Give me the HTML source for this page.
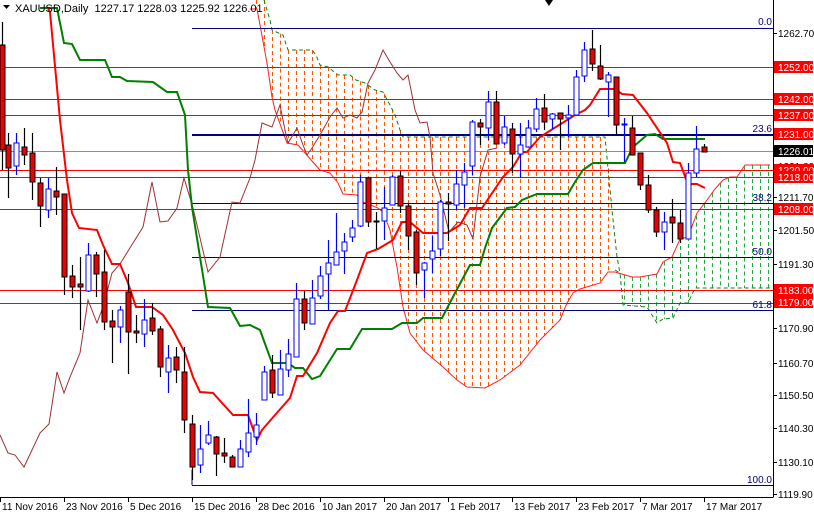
<!DOCTYPE html>
<html><head><meta charset="utf-8">
<style>
html,body{margin:0;padding:0;background:#fff;}
svg{display:block;font-family:"Liberation Sans",sans-serif;}
</style></head>
<body>
<svg id="s" width="814" height="514" viewBox="0 0 814 514" xmlns="http://www.w3.org/2000/svg">
<rect width="814" height="514" fill="#fff"/>
<g id="cloud"></g>
<g stroke="#ff0000" stroke-width="1" shape-rendering="crispEdges">
<line x1="0" y1="67.5" x2="773" y2="67.5"/>
<line x1="0" y1="99.5" x2="773" y2="99.5"/>
<line x1="0" y1="115.5" x2="773" y2="115.5"/>
<line x1="0" y1="170.5" x2="773" y2="170.5"/>
<line x1="0" y1="177.5" x2="773" y2="177.5"/>
<line x1="0" y1="209.5" x2="773" y2="209.5"/>
<line x1="0" y1="290.5" x2="773" y2="290.5"/>
<line x1="0" y1="303.5" x2="773" y2="303.5"/>
</g>
<line x1="0" y1="151.5" x2="773" y2="151.5" stroke="#8090a0" stroke-width="1"/>
<g stroke="#000080" stroke-width="1" shape-rendering="crispEdges">
<line x1="192" y1="28.5" x2="773" y2="28.5"/>
<line x1="192" y1="135" x2="773" y2="135" stroke-width="2"/>
<line x1="192" y1="203.5" x2="773" y2="203.5"/>
<line x1="192" y1="257.5" x2="773" y2="257.5"/>
<line x1="192" y1="310.5" x2="773" y2="310.5"/>
<line x1="192" y1="485.5" x2="773" y2="485.5"/>
<line x1="192" y1="485" x2="192" y2="470"/>
</g>
<g font-size="10" fill="#000080" text-anchor="end">
<text x="772" y="25">0.0</text>
<text x="772" y="132">23.6</text>
<text x="772" y="201">38.2</text>
<text x="772" y="255">50.0</text>
<text x="772" y="308">61.8</text>
<text x="772" y="483">100.0</text>
</g>
<g id="lines" fill="none"></g>
<g id="candles"></g>
<rect x="773" y="0" width="41" height="514" fill="#fff"/>
<rect x="0" y="497" width="814" height="17" fill="#fff"/>
<line x1="773.5" y1="0" x2="773.5" y2="497" stroke="#000"/>
<line x1="0" y1="497.5" x2="773.5" y2="497.5" stroke="#000"/>
<g id="axis" font-size="10" fill="#000"></g>
<g font-size="11" fill="#000">
<path d="M3 5 L10 5 L6.5 9 Z" fill="#000"/>
<text x="15" y="12" xml:space="preserve">XAUUSD,Daily  1227.17 1228.03 1225.92 1226.01</text>
</g>
<path d="M545 0 L553 0 L549 6 Z" fill="#000"/>
</svg>
<script>
var NS="http://www.w3.org/2000/svg";
function el(p,t,a){var e=document.createElementNS(NS,t);for(var k in a)e.setAttribute(k,a[k]);p.appendChild(e);return e;}
function interp(pts,x){for(var i=0;i<pts.length-1;i++){if(x>=pts[i][0]&&x<=pts[i+1][0]){var t=(x-pts[i][0])/(pts[i+1][0]-pts[i][0]||1);return pts[i][1]+t*(pts[i+1][1]-pts[i][1]);}}return null;}
var cl=document.getElementById('cloud');
var U=[[256,0],[264,0],[270,20],[272,30],[283,35],[288,50],[312,50],[316,55],[320,65],[328,67],[338,75],[350,75],[356,80],[365,83],[375,90],[383,92],[390,105],[395,115],[400,130],[403,137],[605,137],[612,210],[617,257],[620,273]];
var L=[[250,9],[257,9],[260,25],[267,63],[272,97],[275,110],[287,143],[298,145],[305,153],[320,170],[330,173],[338,183],[343,194],[357,195],[363,202],[378,208],[383,212],[390,230],[395,257],[397,267],[400,287],[403,307],[410,333],[423,350],[443,367],[457,380],[467,387],[485,388],[500,380],[520,365],[540,340],[560,320],[567,303],[573,293],[580,289],[600,283],[608,272],[615,272]];
for(var x=256;x<=608;x+=8){var a=interp(U,x),b=interp(L,x);if(a!=null&&b!=null&&b>a)el(cl,'line',{x1:x+.5,y1:a,x2:x+.5,y2:b,stroke:'#ff5500','stroke-dasharray':'4,3','stroke-width':1});}
var GA=[[615,272],[632,277],[640,277],[657,274],[663,262],[672,257],[680,239],[688,237],[697,213],[707,200],[715,189],[723,180],[730,177],[737,177],[745,165],[770,165]];
var GB=[[615,270],[620,273],[623,305],[647,307],[657,323],[663,319],[673,318],[680,303],[688,303],[695,288],[770,288]];
for(var x=624;x<=770;x+=8){var a=interp(GA,x),b=interp(GB,x);if(a!=null&&b!=null&&b>a)el(cl,'line',{x1:x+.5,y1:a,x2:x+.5,y2:b,stroke:'#22aa44','stroke-dasharray':'4,3','stroke-width':1});}
function pl(g,pts,c,w,d){var s=pts.map(function(p){return p[0]+','+p[1]}).join(' ');var a={points:s,stroke:c,'stroke-width':w,fill:'none'};if(d)a['stroke-dasharray']=d;el(g,'polyline',a);}
pl(cl,U.slice(1),'#108010',1,'4,3');
pl(cl,L.concat(GA.slice(1)),'#ff2020',1);
pl(cl,GB,'#108010',1,'4,3');
var lg=document.getElementById('lines');
var chik=[[0,435],[8,453],[15,455],[24,467],[40,433],[49,424],[57,372],[64,393],[70,377],[80,353],[88,300],[97,323],[103,307],[112,273],[120,264],[133,243],[143,227],[152,182],[160,222],[168,221],[177,208],[184,178],[193,208],[208,272],[220,257],[232,202],[240,203],[248,183],[250,178],[255,160],[262,123],[272,127],[280,105],[285,130],[288,143],[293,135],[297,128],[303,145],[307,155],[312,148],[320,135],[330,117],[337,108],[343,118],[350,115],[357,118],[362,112],[368,83],[375,70],[383,50],[390,62],[397,73],[403,80],[408,75],[415,110],[420,123],[427,122],[430,137],[433,173],[440,195],[449,232],[458,222],[467,225],[473,239],[480,177],[488,150],[497,148]];
pl(lg,chik,'#a03030',1);
var kij=[[40,8],[57,8],[64,43],[72,44],[80,60],[105,60],[112,77],[120,77],[127,81],[153,82],[167,92],[177,92],[185,115],[188,170],[192,207],[200,257],[208,307],[230,308],[240,326],[250,325],[260,330],[272,363],[288,363],[295,368],[303,368],[312,379],[320,376],[337,349],[350,349],[362,329],[392,329],[402,323],[417,323],[423,318],[442,318],[455,293],[470,265],[480,265],[485,248],[492,228],[507,208],[515,207],[522,200],[537,194],[568,194],[575,182],[583,170],[593,163],[625,163],[633,147],[647,135],[655,134],[663,139],[705,139]];
pl(lg,kij,'#008000',2);
var ten=[[48,8],[50,12],[60,120],[67,180],[72,213],[79,228],[97,230],[103,245],[112,264],[120,264],[128,283],[136,307],[152,307],[163,315],[173,330],[185,353],[193,377],[200,392],[213,393],[233,415],[248,415],[257,440],[262,430],[275,415],[290,398],[297,376],[303,376],[317,353],[330,323],[338,311],[345,311],[357,280],[367,253],[378,249],[393,240],[402,222],[410,222],[423,233],[447,233],[460,225],[470,208],[482,208],[503,177],[513,167],[522,152],[527,152],[540,137],[575,115],[585,110],[590,105],[600,89],[615,89],[622,94],[633,95],[647,113],[667,143],[673,162],[680,163],[688,184],[697,184],[705,188]];
pl(lg,ten,'#ff0000',2);
var C=[[0,45,150,22,170,'r'],[1,145,168,133,198,'r'],[2,143,166,133,175,'b'],[3,147,155,128,165,'r'],[4,153,182,133,200,'r'],[5,183,206,178,227,'r'],[6,189,210,178,218,'b'],[7,191,197,167,215,'r'],[8,194,277,194,295,'r'],[9,276,287,265,298,'r'],[10,284,287,257,330,'r'],[11,255,291,243,292,'b'],[12,255,274,252,297,'r'],[13,272,322,250,330,'r'],[14,321,327,310,363,'r'],[15,310,327,306,343,'b'],[16,292,332,274,374,'r'],[17,331,333,315,343,'r'],[18,320,334,299,347,'b'],[19,318,331,303,335,'r'],[20,329,367,326,377,'r'],[21,358,372,345,393,'b'],[22,357,370,347,383,'r'],[23,372,420,347,433,'r'],[24,424,467,415,480,'r'],[25,449,465,425,473,'b'],[26,435,443,421,445,'b'],[27,437,454,436,476,'r'],[28,453,456,438,463,'r'],[29,457,467,455,467,'r'],[30,449,467,440,467,'b'],[31,433,452,399,457,'b'],[32,425,437,413,445,'b'],[33,372,400,366,400,'b'],[34,370,393,355,398,'r'],[35,369,395,350,395,'b'],[36,354,370,339,377,'b'],[37,299,357,283,357,'b'],[38,299,323,291,330,'r'],[39,298,324,280,324,'b'],[40,276,296,266,299,'b'],[41,263,274,240,310,'b'],[42,252,265,213,265,'b'],[43,242,251,233,274,'b'],[44,228,237,220,242,'b'],[45,182,226,175,227,'b'],[46,178,222,177,227,'r'],[47,221,222,212,249,'r'],[48,208,221,187,240,'b'],[49,177,205,175,205,'b'],[50,176,206,171,213,'r'],[51,206,236,203,250,'r'],[52,232,273,230,285,'r'],[53,263,270,262,298,'b'],[54,251,259,236,273,'b'],[55,202,249,200,256,'b'],[56,202,204,193,241,'r'],[57,184,205,170,210,'b'],[58,172,185,163,208,'b'],[59,122,166,120,175,'b'],[60,123,127,119,145,'r'],[61,102,128,91,140,'b'],[62,102,144,91,144,'r'],[63,127,143,116,145,'b'],[64,129,154,123,173,'r'],[65,145,154,123,178,'b'],[66,128,147,120,147,'b'],[67,109,129,98,132,'b'],[68,108,122,94,130,'r'],[69,114,119,113,129,'b'],[70,113,119,113,150,'r'],[71,115,118,105,137,'b'],[72,77,115,70,115,'b'],[73,50,76,42,82,'b'],[74,49,64,30,71,'r'],[75,66,79,45,80,'r'],[76,75,82,72,117,'b'],[77,77,125,77,135,'r'],[78,124,125,118,162,'b'],[79,128,155,116,155,'r'],[80,153,185,153,190,'r'],[81,185,210,175,213,'r'],[82,210,232,207,237,'r'],[83,222,232,212,250,'b'],[84,217,223,199,243,'r'],[85,223,239,210,243,'r'],[86,173,239,163,239,'b'],[87,149,173,126,177,'b'],[88,147,152,144,152,'r']];
var cg=document.getElementById('candles');
C.forEach(function(c){var x=c[0]*8+0.5;if(c[0]==0)x=2.5;var col=c[5]=='r'?'#000':'#0000ff';
el(cg,'line',{x1:x,y1:c[3],x2:x,y2:c[4],stroke:col,'stroke-width':1.2});
var h=Math.max(c[2]-c[1],1);
el(cg,'rect',{x:x-2.5,y:c[1],width:5,height:h,fill:c[5]=='r'?'#ee0000':'#fff',stroke:col,'stroke-width':1});});
var ax=document.getElementById('axis');
var labs=[[33,'1262.70',0],[67,'1252.00',1],[99,'1242.00',1],[115,'1237.00',1],[166,'1221.80',0],[197,'1211.70',0],[230,'1201.50',0],[264,'1191.30',0],[328,'1170.90',0],[363,'1160.70',0],[395,'1150.50',0],[428,'1140.30',0],[462,'1130.10',0],[494,'1119.90',0],[134,'1231.00',1],[151,'1226.01',2],[170,'1220.00',1],[177,'1218.00',1],[209,'1208.00',1],[290,'1183.00',1],[302,'1179.00',1]];
labs.forEach(function(l){el(ax,'line',{x1:773,y1:l[0]+.5,x2:777,y2:l[0]+.5,stroke:'#000'});
if(l[2]){el(ax,'rect',{x:774,y:l[0]-6,width:39,height:12,fill:l[2]==1?'#ff0000':'#000'});}
var t=el(ax,'text',{x:778,y:l[0]+4,fill:l[2]?'#fff':'#000'});t.textContent=l[1];});
var dl=['11 Nov 2016','23 Nov 2016','5 Dec 2016','15 Dec 2016','28 Dec 2016','10 Jan 2017','20 Jan 2017','1 Feb 2017','13 Feb 2017','23 Feb 2017','7 Mar 2017','17 Mar 2017'];
dl.forEach(function(d,i){var x=i*64;el(ax,'line',{x1:x+.5,y1:497,x2:x+.5,y2:502,stroke:'#000'});var t=el(ax,'text',{x:x+2,y:510});t.textContent=d;});
</script>
</body></html>
